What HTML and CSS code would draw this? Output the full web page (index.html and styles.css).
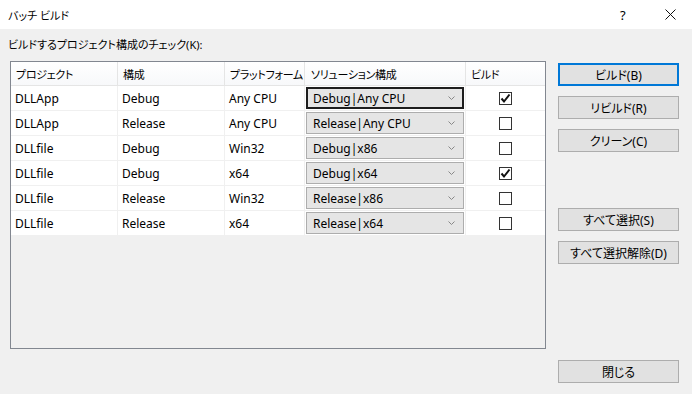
FILE: index.html
```html
<!DOCTYPE html>
<html lang="ja">
<head>
    <meta charset="UTF-8">
    <title>バッチ ビルド</title>
    <link rel="stylesheet" href="styles.css">
</head>
<body>
    <div class="dialog">
        <div class="titlebar">
            <span class="title">バッチ ビルド</span>
            <span class="help">?</span>
            <span class="close">
                <svg width="11" height="11" viewBox="0 0 11 11"><path d="M0.5 0.5 L10.5 10.5 M10.5 0.5 L0.5 10.5" stroke="#111" stroke-width="1"/></svg>
            </span>
        </div>

        <div class="content">
            <div class="left">
                <div class="label">ビルドするプロジェクト構成のチェック(K):</div>
                <div class="grid">
                    <div class="row head">
                        <div class="cell">プロジェクト</div>
                        <div class="cell">構成</div>
                        <div class="cell">プラットフォーム</div>
                        <div class="cell">ソリューション構成</div>
                        <div class="cell">ビルド</div>
                    </div>
                    <div class="row">
                        <div class="cell">DLLApp</div>
                        <div class="cell">Debug</div>
                        <div class="cell">Any CPU</div>
                        <div class="cell combo-cell"><div class="combo focused">Debug|Any CPU<svg class="chev" width="7" height="4" viewBox="0 0 7 4"><path d="M0.5 0.5 L3.5 3.5 L6.5 0.5" fill="none" stroke="#888"/></svg></div></div>
                        <div class="cell check-cell"><span class="check on"><svg width="11" height="11" viewBox="0 0 11 11"><path d="M1.5 5.5 L4 8.5 L9.5 1.5" fill="none" stroke="#111" stroke-width="2"/></svg></span></div>
                    </div>
                    <div class="row">
                        <div class="cell">DLLApp</div>
                        <div class="cell">Release</div>
                        <div class="cell">Any CPU</div>
                        <div class="cell combo-cell"><div class="combo">Release|Any CPU<svg class="chev" width="7" height="4" viewBox="0 0 7 4"><path d="M0.5 0.5 L3.5 3.5 L6.5 0.5" fill="none" stroke="#888"/></svg></div></div>
                        <div class="cell check-cell"><span class="check"></span></div>
                    </div>
                    <div class="row">
                        <div class="cell">DLLfile</div>
                        <div class="cell">Debug</div>
                        <div class="cell">Win32</div>
                        <div class="cell combo-cell"><div class="combo">Debug|x86<svg class="chev" width="7" height="4" viewBox="0 0 7 4"><path d="M0.5 0.5 L3.5 3.5 L6.5 0.5" fill="none" stroke="#888"/></svg></div></div>
                        <div class="cell check-cell"><span class="check"></span></div>
                    </div>
                    <div class="row">
                        <div class="cell">DLLfile</div>
                        <div class="cell">Debug</div>
                        <div class="cell">x64</div>
                        <div class="cell combo-cell"><div class="combo">Debug|x64<svg class="chev" width="7" height="4" viewBox="0 0 7 4"><path d="M0.5 0.5 L3.5 3.5 L6.5 0.5" fill="none" stroke="#888"/></svg></div></div>
                        <div class="cell check-cell"><span class="check on"><svg width="11" height="11" viewBox="0 0 11 11"><path d="M1.5 5.5 L4 8.5 L9.5 1.5" fill="none" stroke="#111" stroke-width="2"/></svg></span></div>
                    </div>
                    <div class="row">
                        <div class="cell">DLLfile</div>
                        <div class="cell">Release</div>
                        <div class="cell">Win32</div>
                        <div class="cell combo-cell"><div class="combo">Release|x86<svg class="chev" width="7" height="4" viewBox="0 0 7 4"><path d="M0.5 0.5 L3.5 3.5 L6.5 0.5" fill="none" stroke="#888"/></svg></div></div>
                        <div class="cell check-cell"><span class="check"></span></div>
                    </div>
                    <div class="row">
                        <div class="cell">DLLfile</div>
                        <div class="cell">Release</div>
                        <div class="cell">x64</div>
                        <div class="cell combo-cell"><div class="combo">Release|x64<svg class="chev" width="7" height="4" viewBox="0 0 7 4"><path d="M0.5 0.5 L3.5 3.5 L6.5 0.5" fill="none" stroke="#888"/></svg></div></div>
                        <div class="cell check-cell"><span class="check"></span></div>
                    </div>
                </div>
            </div>

            <div class="buttons">
                <button class="btn default">ビルド(B)</button>
                <button class="btn">リビルド(R)</button>
                <button class="btn">クリーン(C)</button>
                <button class="btn gap-top">すべて選択(S)</button>
                <button class="btn">すべて選択解除(D)</button>
                <button class="btn close-btn">閉じる</button>
            </div>
        </div>
    </div>
</body>
</html>
```

FILE: styles.css
```css
body {
    margin: 0;
    font-family: "Noto Sans", "Noto Sans CJK JP", sans-serif;
    font-size: 12px;
    font-feature-settings: "palt";
    color: #000;
    background: #f0f0f0;
}
.dialog {
    width: 692px;
    height: 394px;
    display: flex;
    flex-direction: column;
    background: #f0f0f0;
}
.titlebar {
    height: 29px;
    background: #fff;
    display: flex;
    align-items: center;
    padding-left: 8px;
}
.title {
    flex: 1;
    font-size: 11px;
}
.help {
    width: 14px;
    margin-right: 31px;
    font-size: 13px;
}
.close {
    display: flex;
    margin-right: 16px;
}
.content {
    flex: 1;
    display: flex;
    padding: 8px 0 0 10px;
}
.left {
    width: 536px;
}
.label {
    font-size: 11px;
    line-height: 16px;
    margin-bottom: 8px;
    margin-left: -2px;
}
.grid {
    height: 286px;
    border: 1px solid #828790;
    background: #f0f0f0;
}
.row {
    display: grid;
    grid-template-columns: 107px 107px 80px 161px 79px;
    height: 25px;
    background: #fff;
}
.cell {
    border-right: 1px solid #f0f0f0;
    border-bottom: 1px solid #f0f0f0;
    padding-left: 4px;
    display: flex;
    align-items: center;
    white-space: nowrap;
    overflow: hidden;
}
.cell:last-child {
    border-right: none;
}
.head {
    height: 24px;
    background: linear-gradient(#ffffff, #f7f8fa);
}
.head .cell {
    font-size: 11px;
    letter-spacing: -0.3px;
    border-right-color: #e5e5e5;
    border-bottom-color: #e5e5e5;
    padding-left: 5px;
}
.head .cell:nth-child(4) {
    padding-left: 6px;
}
.combo-cell {
    padding: 0 1px;
}
.combo {
    width: 100%;
    height: 22px;
    box-sizing: border-box;
    border: 1px solid #adadad;
    background: #e5e5e5;
    display: flex;
    align-items: center;
    padding-left: 6px;
    padding-right: 8px;
}
.combo.focused {
    border: 2px solid #1e1e1e;
    padding-left: 5px;
    padding-right: 7px;
}
.chev {
    margin-left: auto;
}
.check-cell {
    justify-content: center;
    padding-left: 0;
}
.check {
    width: 13px;
    height: 13px;
    box-sizing: border-box;
    border: 1px solid #333;
    background: #fff;
    display: flex;
    align-items: center;
    justify-content: center;
}
.buttons {
    width: 121px;
    margin-left: 12px;
    display: flex;
    flex-direction: column;
    padding-top: 26px;
    padding-bottom: 11px;
}
.btn {
    height: 23px;
    width: 121px;
    margin-bottom: 10px;
    border: 1px solid #adadad;
    background: #e1e1e1;
    font-family: "Noto Sans", "Noto Sans CJK JP", sans-serif;
    font-size: 12px;
    font-feature-settings: "palt";
    color: #000;
    padding: 0;
}
.btn.default {
    border: 2px solid #0078d7;
}
.gap-top {
    margin-top: 46px;
}
.close-btn {
    margin-top: auto;
    margin-bottom: 0;
}
```
